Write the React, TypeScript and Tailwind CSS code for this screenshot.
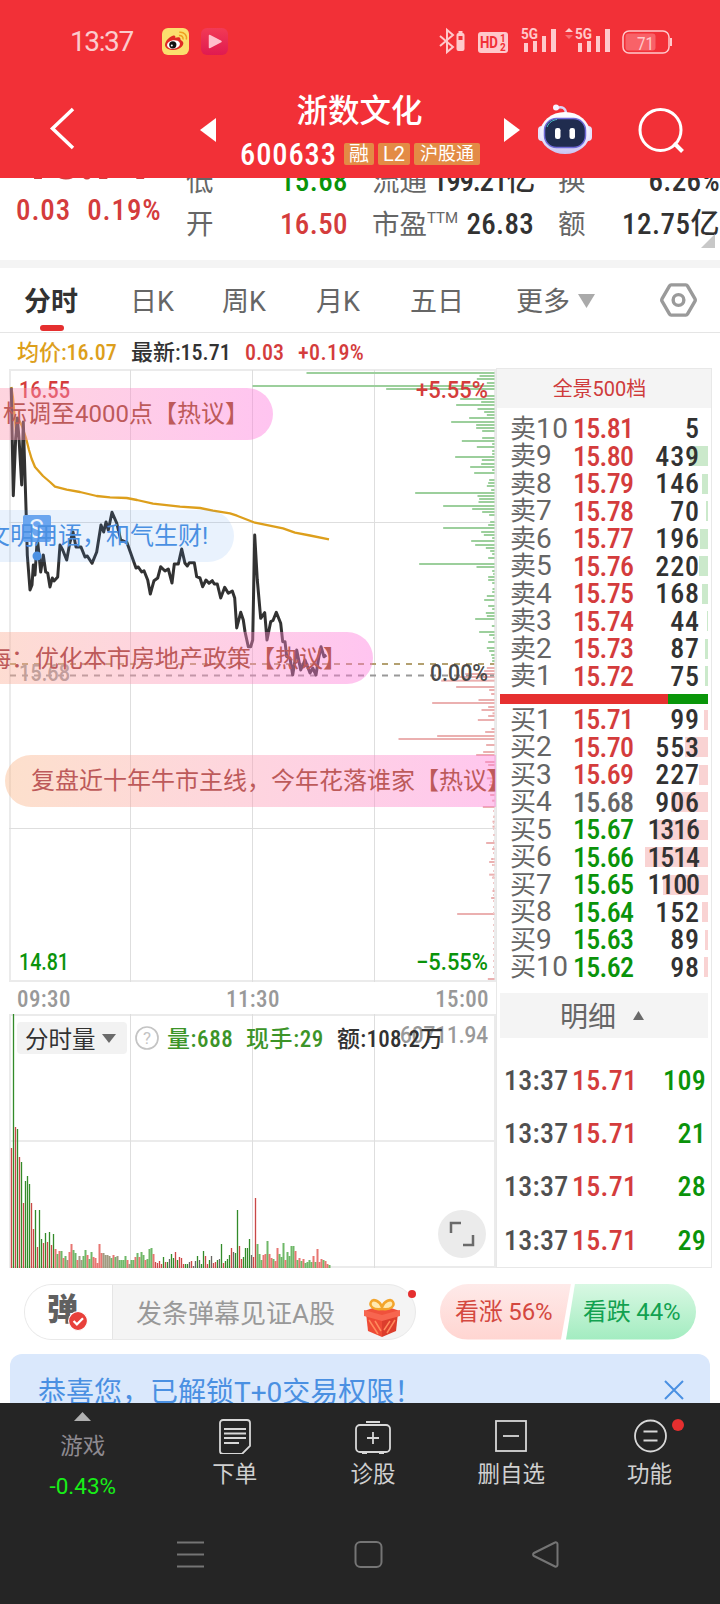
import {FC, memo, ReactNode} from 'react';

type Tone = 'up' | 'down' | 'flat';

const toneText: Record<Tone, string> = {
  up: 'text-[#d43c3c]',
  down: 'text-[#0a930a]',
  flat: 'text-[#666666]',
};

interface Level {
  label: string;
  price: string;
  size: number;
  bar: number;
  tone: Tone;
}

const asks: Level[] = [
  {label: '10', price: '15.81', size: 5, bar: 0, tone: 'up'},
  {label: '9', price: '15.80', size: 439, bar: 18, tone: 'up'},
  {label: '8', price: '15.79', size: 146, bar: 6, tone: 'up'},
  {label: '7', price: '15.78', size: 70, bar: 2, tone: 'up'},
  {label: '6', price: '15.77', size: 196, bar: 8, tone: 'up'},
  {label: '5', price: '15.76', size: 220, bar: 9, tone: 'up'},
  {label: '4', price: '15.75', size: 168, bar: 6, tone: 'up'},
  {label: '3', price: '15.74', size: 44, bar: 1, tone: 'up'},
  {label: '2', price: '15.73', size: 87, bar: 3, tone: 'up'},
  {label: '1', price: '15.72', size: 75, bar: 3, tone: 'up'},
];

const bids: Level[] = [
  {label: '1', price: '15.71', size: 99, bar: 4, tone: 'up'},
  {label: '2', price: '15.70', size: 553, bar: 23, tone: 'up'},
  {label: '3', price: '15.69', size: 227, bar: 9, tone: 'up'},
  {label: '4', price: '15.68', size: 906, bar: 37, tone: 'flat'},
  {label: '5', price: '15.67', size: 1316, bar: 54, tone: 'down'},
  {label: '6', price: '15.66', size: 1514, bar: 63, tone: 'down'},
  {label: '7', price: '15.65', size: 1100, bar: 45, tone: 'down'},
  {label: '8', price: '15.64', size: 152, bar: 6, tone: 'down'},
  {label: '9', price: '15.63', size: 89, bar: 3, tone: 'down'},
  {label: '10', price: '15.62', size: 98, bar: 4, tone: 'down'},
];

const trades = [109, 21, 28, 29];

const averageLine =
  '11.3,387 13,398 16,432 19,420 22,426 26,438 29,450 31.7,459 35,467 43,476 50,482 55,486.7 66.7,489.7 80,492 96.7,496 110,497.3 126.7,498 137,500 153,503.7 180,506.7 200,508 213,510.7 230,513.3 237,515.7 255,522.7 283,528.3 295,532.7 310,535.5 329,539.3';

const priceLine =
  '11.3,387.7 13.3,495.7 15.7,438 17.3,418 19,438 21.7,485 23.3,422 26,508 27.3,555 30,590 32,585 33.3,565 35,575 37.3,538 40.7,572 43.3,555 45.7,572 47.7,573 50,587 52.3,578 54,581 57.7,577 60,545 62.7,550 66.7,560 70,542 73,532 76,547 81,547 85,557 87.3,556 92,563.3 96.7,552 101,525 103.7,532 106,522 108.3,530 112,512.3 116.7,523 120.7,540 127,542.7 136,568 138.3,567 141.7,572 144,570.7 147.7,580 150.3,594 154,580.7 157.7,578 160.7,566.7 165,571 168.3,569 172,583 174.3,564 178.3,564 181.7,549 185,563.3 187.3,566 189.3,562.7 194.3,562.7 196.7,576.7 200,578 202.7,586.7 206,580 209,583.3 212.3,580.7 214.3,584 217.3,584 220.7,598 224.7,587.3 228.3,593.3 232.3,591 234.7,598 236.7,628 240.7,612.3 243.3,620 245,631.7 248.3,646.7 250.7,646.7 252.7,640 254.7,535 257.3,580 260.7,618.3 264.7,612.7 267,640 270.7,621.7 273,620.5 276.3,612.3 280.7,623.3 282.7,641.7 285,641.7 286.7,656.7 290,658 292.7,675 296.7,650 300.7,670 305,660 310,673 312.7,668 316,675 318.3,660 321,646.7 324,656.7 326.3,655';

// [offset, length] of every resting order bar, in thirds of a pixel
const askDepth: [number, number][] = [
  [339, 564], [348, 45], [357, 53], [369, 23], [378, 726], [387, 325], [408, 30], [417, 103], [426, 40], [435, 115],
  [447, 51], [456, 31], [465, 23], [474, 76], [486, 130], [495, 55], [504, 55], [513, 37], [534, 37], [543, 98],
  [552, 7], [561, 53], [573, 7], [582, 7], [591, 118], [600, 38], [612, 40], [621, 73], [630, 7], [639, 61],
  [660, 16], [669, 19], [678, 23], [690, 10], [699, 238], [708, 51], [717, 46], [726, 48], [738, 154], [747, 67],
  [756, 37], [765, 16], [786, 13], [795, 19], [804, 154], [816, 40], [825, 32], [834, 7], [843, 70], [855, 58],
  [864, 26], [873, 13], [882, 7], [894, 19], [912, 226], [921, 54], [933, 7], [942, 4], [951, 19], [960, 19],
  [969, 7], [987, 6], [996, 7], [1008, 23], [1020, 31], [1038, 19], [1047, 7], [1059, 26], [1068, 23], [1077, 58],
  [1098, 8], [1116, 46], [1125, 16], [1134, 4], [1146, 19], [1164, 23], [1173, 16], [1185, 10], [1194, 7], [1203, 7],
];

const bidDepth: [number, number][] = [
  [1212, 7], [1224, 23], [1233, 31], [1242, 88], [1251, 113], [1262, 160], [1281, 115], [1290, 16], [1302, 10],
  [1320, 48], [1329, 187], [1341, 19], [1350, 39], [1360, 6], [1368, 19], [1380, 50], [1407, 9], [1416, 28],
  [1428, 172], [1437, 288], [1455, 25], [1476, 34], [1485, 55], [1506, 28], [1515, 19], [1530, 23], [1555, 23],
  [1565, 13], [1575, 16], [1590, 7], [1605, 13], [1622, 7], [1641, 35], [1670, 4], [1685, 6], [1700, 6], [1725, 3],
  [1749, 25], [1767, 7], [1797, 10], [1806, 16], [1815, 7], [1844, 16], [1853, 7], [1893, 6], [1914, 10],
  [1962, 112], [2157, 20],
];

const volumeHeights = [
  120, 254, 141, 139, 111, 106, 65, 87, 92, 84, 65, 39, 58, 21, 58, 29, 25, 35, 26, 36, 23, 34, 19, 14, 17, 17, 10, 12,
  8, 16, 24, 18, 15, 8, 12, 8, 12, 18, 13, 9, 16, 11, 10, 5, 24, 15, 15, 13, 13, 12, 10, 13, 11, 12, 8, 8, 8, 12, 8, 4,
  8, 8, 11, 15, 11, 16, 13, 8, 9, 19, 20, 14, 6, 5, 7, 4, 11, 6, 6, 9, 14, 10, 16, 8, 11, 10, 4, 4, 4, 6, 7, 2, 7, 12,
  8, 4, 17, 12, 4, 8, 12, 5, 6, 8, 9, 24, 5, 7, 9, 13, 20, 16, 15, 58, 22, 9, 11, 20, 20, 29, 13, 11, 70, 24, 14, 8,
  13, 14, 27, 14, 10, 9, 7, 20, 14, 11, 25, 8, 16, 12, 22, 22, 17, 8, 10, 7, 9, 5, 6, 8, 6, 12, 6, 19, 6, 9, 8, 7, 4, 3,
];

// r: up minute, g: down minute, n: unchanged; ten minutes per entry
const volumeTones = [
  'rgrgrgrggg',
  'rrgrggrgrg',
  'rgrgrgrgnr',
  'rggrnnggrg',
  'grrrrrnnnn',
  'grgnggggrn',
  'ggrgrggrgg',
  'grrrrrgrgn',
  'ggrgrrrggn',
  'rnngnggrrg',
  'nrrgngrggg',
  'rnggrrgggg',
  'nrrgggrrgr',
  'rgrrgggrgg',
  'ggrgrgrggg',
  'grgrrrgrrg',
].join('');

const toneFill: Record<string, string> = {r: '#c84848', g: '#338a2a', n: '#666666'};
const softFill: Record<string, string> = {r: '#e87672', g: '#6fb868', n: '#a09a80'};

const ChartText: FC<{
  x: number;
  y: number;
  width: number;
  fill: string;
  end?: boolean;
  children: ReactNode;
}> = ({x, y, width, fill, end, children}) => (
  <text
    className="text-[23px] font-medium"
    fill={fill}
    lengthAdjust="spacingAndGlyphs"
    textAnchor={end ? 'end' : 'start'}
    textLength={width}
    x={x}
    y={y}>
    {children}
  </text>
);

const StatusBar: FC = memo(() => (
  <div className="flex h-[82px] items-center pl-[70px] pr-[46px] text-white/75">
    <span className="w-[92px] pt-[2px] text-[28px] tracking-[-1.400px]">13:37</span>
    <svg className="h-[27px] w-[27px]" viewBox="0 0 27 27">
      <rect fill="#fbdf6e" height="27" rx="6" width="27" />
      <path
        d="M3 17c0-4 5-9 8.500-9.500 2-.2 2 1 1.700 2.300 2.500-1 5.500-1 5.300 1.500-.1 1 .8 1 1.700 1.700C24 16 18 22 11.500 22 7 22 3 20 3 17z"
        fill="#e02a24"
      />
      <ellipse cx="11.500" cy="16.500" fill="#fff" rx="6.500" ry="4.300" transform="rotate(-8 11.500 16.500)" />
      <circle cx="10.800" cy="16.800" fill="#111" r="3.600" />
      <circle cx="9.800" cy="17.500" fill="#fff" r="1" />
      <path d="M17 7.500c2.500-.5 4.500 1.500 4 4M17.300 4.300c4.500-.8 8 2.700 7 7.200" fill="none" stroke="#f0a020" strokeWidth="1.500" />
    </svg>
    <svg className="ml-3 h-[27px] w-[27px]" viewBox="0 0 27 27">
      <defs>
        <linearGradient id="play" x1="0" x2="0" y1="0" y2="1">
          <stop offset="0" stopColor="#f23a55" />
          <stop offset="1" stopColor="#e01a50" />
        </linearGradient>
      </defs>
      <rect fill="url(#play)" height="27" rx="6" width="27" />
      <path d="M8.500 7.500v12l11.500-6z" fill="#ffc0cc" stroke="#ffc0cc" strokeLinejoin="round" strokeWidth="1.500" />
    </svg>
    <svg className="ml-auto h-[34px] w-[236px]" fill="none" viewBox="438 24 236 34">
      <path d="M440 36l13 11-6 5V30l6 5-13 11" stroke="#ffc9cb" strokeWidth="2" />
      <rect fill="#ffc9cb" height="18" rx="2" width="8" x="456.500" y="33" />
      <rect fill="#f23037" height="4" width="4" x="458.500" y="36" />
      <rect fill="#ffc9cb" height="2" width="4" x="458.500" y="31" />
      <rect fill="#ffc9cb" height="21" rx="3" width="30" x="478" y="32" />
      <text className="text-[17px] font-bold" fill="#f23037" lengthAdjust="spacingAndGlyphs" textLength="18" x="480" y="48">
        HD
      </text>
      <text className="text-[10px] font-bold" fill="#f23037" x="500" y="42">
        1
      </text>
      <text className="text-[10px] font-bold" fill="#f23037" x="500" y="51">
        2
      </text>
      <g fill="#ffc9cb">
        <text className="text-[15px] font-bold" lengthAdjust="spacingAndGlyphs" textLength="17" x="521" y="39">
          5G
        </text>
        <path d="M524 43h4v9h-4zM533 41h4v11h-4zM542 36h4v16h-4zM551 29h5v23h-5z" />
        <path d="M565 32l4-4 4 4z" />
        <path d="M565 35l4 4 4-4z" opacity=".4" />
        <text className="text-[15px] font-bold" lengthAdjust="spacingAndGlyphs" textLength="17" x="575" y="39">
          5G
        </text>
        <path d="M578 43h4v9h-4zM587 41h4v11h-4zM596 36h4v16h-4zM605 29h5v23h-5z" />
        <path d="M670 38h2v8h-2z" />
      </g>
      <rect height="22" rx="6" stroke="#ffc9cb" strokeWidth="1.500" width="46" x="623" y="31" />
      <rect fill="#f86268" height="17" rx="3" width="30" x="625.500" y="33.500" />
      <text className="text-[19px]" fill="#ffc9cb" lengthAdjust="spacingAndGlyphs" textLength="17" x="637" y="49.500">
        71
      </text>
    </svg>
  </div>
));

const Robot: FC = () => (
  <svg className="h-[52px] w-[56px]" viewBox="0 0 56 52">
    <defs>
      <linearGradient id="shell" x1="0" x2="0" y1="0" y2="1">
        <stop offset="0" stopColor="#ffffff" />
        <stop offset=".6" stopColor="#eceafd" />
        <stop offset="1" stopColor="#c9c3f2" />
      </linearGradient>
    </defs>
    <path d="M20 5c5-2 9 0 9 6" fill="none" stroke="#d9d4f6" strokeWidth="2.500" />
    <circle cx="19" cy="4.500" fill="#f6f3ff" r="3" />
    <rect fill="#e6e2fb" height="15" rx="4" width="54" x="1" y="23" />
    <ellipse cx="28" cy="30" fill="url(#shell)" rx="25" ry="21" />
    <rect fill="#202c4f" height="29" rx="12" stroke="#6f6ad8" strokeWidth="1.500" width="41" x="7.500" y="15.500" />
    <path d="M10 24c2-5 6-7 10-7.500" fill="none" stroke="#4dc0d0" strokeWidth="1" />
    <rect fill="#fff" height="11" rx="2.300" width="5.500" x="18" y="25" />
    <rect fill="#fff" height="11" rx="2.300" width="5.500" x="32.500" y="25" />
  </svg>
);

const TitleBar: FC = memo(() => (
  <div className="flex h-24 text-white">
    <svg className="ml-[48px] mt-[24px] h-[44px] w-[28px]" fill="none" viewBox="0 0 28 44">
      <path d="M25 3L4.500 22.500 25 42" stroke="#fff" strokeWidth="3.500" />
    </svg>
    <svg className="ml-[124px] mt-[36px] h-6 w-4" viewBox="0 0 16 24">
      <path d="M16 0v24L0 12z" fill="#fff" />
    </svg>
    <div className="ml-6 w-[240px]">
      <h1 className="h-[52px] pr-px pt-[4px] text-center text-[31.5px] font-medium leading-[52px]">浙数文化</h1>
      <div className="flex h-[40px] items-center gap-1 text-[20px]">
        <span className="w-[100px] pt-[2px] text-[30.5px] font-medium tracking-[.900px] [font-stretch:75%]">600633</span>
        <span className="h-[22px] rounded-xs bg-[#e38b45] px-[5px] text-center leading-[22px]">融</span>
        <span className="h-[22px] w-8 rounded-xs bg-[#e38b45] text-center leading-[22px]">L2</span>
        <span className="h-[22px] w-[66px] shrink-0 rounded-xs bg-[#e38b45] text-center text-[18px] leading-[22px]">
          沪股通
        </span>
      </div>
    </div>
    <svg className="ml-6 mt-[36px] h-6 w-4" viewBox="0 0 16 24">
      <path d="M0 0v24l16-12z" fill="#fff" />
    </svg>
    <div className="ml-[17px] mt-[21px]">
      <Robot />
    </div>
    <svg className="ml-[44px] mt-[24px] h-[48px] w-[48px]" fill="none" stroke="#fff" strokeWidth="3" viewBox="0 0 48 48">
      <circle cx="23.500" cy="24" r="20.500" />
      <path d="M37 37l8.500 8.500" strokeWidth="4" />
    </svg>
  </div>
));

const Quote: FC<{label: string; sup?: string; value: string; className?: string}> = ({
  label,
  sup,
  value,
  className = 'tracking-[.300px] text-[#323232]',
}) => (
  <div className="flex h-[43px] items-center justify-between whitespace-nowrap leading-[43px]">
    <span className="text-[27.500px] text-[#666666]">
      {label}
      {sup && <sup className="top-[-11px] text-[15px]">{sup}</sup>}
    </span>
    <span className={`text-[29px] font-medium [font-stretch:75%] ${className}`}>{value}</span>
  </div>
);

const QuotePanel: FC = memo(() => (
  <div className="relative flex h-[82px] items-end overflow-hidden bg-white pb-[14px]">
    <div className="h-[86px] w-[186px] pl-[16px] text-[#d43c3c]">
      <div className="-mt-[2px] mb-[2px] h-[20px] pl-[4px] text-[56px] font-bold leading-[4px] tracking-[-2.600px]">
        15.71
      </div>
      <div className="flex gap-[16px] text-[29px] font-medium leading-[60px] tracking-[.900px] [font-stretch:75%]">
        <span>0.03</span>
        <span>0.19%</span>
      </div>
    </div>
    <div className="w-[162px]">
      <Quote className="tracking-[.400px] text-[#0a930a]" label="低" value="15.68" />
      <Quote className="tracking-[.400px] text-[#d43c3c]" label="开" value="16.50" />
    </div>
    <div className="ml-[24px] w-[162px]">
      <Quote className="tracking-[-1.200px] text-[#323232]" label="流通" value="199.21亿" />
      <Quote label="市盈" sup="TTM" value="26.83" />
    </div>
    <div className="ml-[24px] w-[162px] shrink-0">
      <Quote label="换" value="6.26%" />
      <Quote className="tracking-[.500px] text-[#323232]" label="额" value="12.75亿" />
    </div>
    <svg className="absolute bottom-[12px] right-[5px] h-[14px] w-[14px]" viewBox="0 0 14 14">
      <path d="M14 0v14H0z" fill="#c8c8c8" />
    </svg>
  </div>
));

const Tabs: FC = memo(() => (
  <div className="flex h-[65px] items-center border-b border-[#e5e5e5] bg-white pl-[24px] pt-[5px] text-[27px] text-[#666666]">
    <div className="relative w-[106px] font-bold text-[#323232]">
      分时
      <i className="absolute -bottom-[8px] left-[16px] h-[6px] w-6 rounded-full bg-[#e52f2f]" />
    </div>
    <span className="w-[92px]">日K</span>
    <span className="w-[94px]">周K</span>
    <span className="w-[94px]">月K</span>
    <span className="w-[106px]">五日</span>
    <span className="w-[62px]">更多</span>
    <svg className="-mt-1 h-[14px] w-[17px]" viewBox="0 0 17 14">
      <path d="M0 0h17L8.500 14z" fill="#aaaaaa" />
    </svg>
    <svg className="-mt-[6px] ml-[65px] h-[36px] w-[37px]" fill="none" stroke="#9a9a9a" strokeWidth="3.500" viewBox="0 0 38 36">
      <path d="M11.500 2.500h15a2 2 0 0 1 1.700 1L35.800 16.500a3 3 0 0 1 0 3L28.200 32.500a2 2 0 0 1-1.700 1h-15a2 2 0 0 1-1.700-1L2.200 19.500a3 3 0 0 1 0-3L9.800 3.500a2 2 0 0 1 1.700-1z" />
      <circle cx="19" cy="18" r="5.500" />
    </svg>
  </div>
));

const Bullet: FC<{className: string; children: string}> = ({className, children}) => (
  <div className={`absolute flex h-[52px] items-center whitespace-nowrap text-[24px] ${className}`}>{children}</div>
);

const PriceChart: FC = memo(() => (
  <div className="relative h-[613px] overflow-hidden">
    <svg className="block h-[613px] w-[496px]" fill="none" viewBox="0 369 496 613">
      <path d="M10 369v613M495 369v613M9 370h487M9 981h487" stroke="#ebebeb" strokeWidth="2" />
      <path d="M130.500 370v612M252.500 370v612M374.500 370v612M9 522.500h487M9 828.500h487" stroke="#dedede" />
      <g transform="translate(494.500 260) scale(.33333)">
        {askDepth.map(([offset, length]) => (
          <rect fill="#9ccf9c" height="6" key={offset} width={length} x={-length} y={offset - 3} />
        ))}
        {bidDepth.map(([offset, length]) => (
          <rect fill="#ebb0b0" height="6" key={offset} width={length} x={-length} y={offset - 3} />
        ))}
      </g>
      <path d="M493.500 810v165" stroke="#f0c8c8" strokeDasharray="2 4" />
      <path d="M10 664h484" stroke="#b3a070" strokeDasharray="6 6" strokeWidth="1.800" />
      <path d="M10 675.500h484" stroke="#999999" strokeDasharray="6 6" strokeWidth="1.800" />
      <polyline points={averageLine} stroke="#dd9f1c" strokeLinejoin="round" strokeWidth="2.300" />
      <polyline points={priceLine} stroke="#323232" strokeLinejoin="round" strokeWidth="3" />
      <ChartText fill="#d43c3c" width={51} x={19} y={398}>16.55</ChartText>
      <ChartText fill="#999999" width={51} x={19} y={681}>15.68</ChartText>
      <ChartText fill="#0a930a" width={50} x={19} y={970}>14.81</ChartText>
      <ChartText end fill="#d43c3c" width={72} x={488} y={398}>+5.55%</ChartText>
      <ChartText end fill="#4a4a4a" width={58} x={488} y={681}>0.00%</ChartText>
      <ChartText end fill="#0a930a" width={72} x={488} y={970}>−5.55%</ChartText>
      <rect fill="#6fa8ef" height="27" rx="2" width="28" x="23" y="515" />
      <text className="text-[25px]" fill="#fff" x="29" y="538">
        S
      </text>
      <circle cx="37" cy="556" fill="#4a90e2" r="4.500" />
    </svg>
    <Bullet className="left-[-240px] top-[19px] w-[513px] rounded-full bg-linear-to-r from-[#fab585]/42 to-[#ff73dc]/42 pl-[243px] text-[#bd5a5a]">
      标调至4000点【热议】
    </Bullet>
    <Bullet className="left-[-42px] top-[141px] w-[276px] rounded-full bg-[#4a90f0]/12 pl-[28px] text-[#4a90e2]">
      文明用语，和气生财!
    </Bullet>
    <Bullet className="left-[-62px] top-[263px] w-[435px] rounded-full bg-linear-to-r from-[#fab585]/42 to-[#ff73dc]/42 pl-[49px] pt-px text-[#bd5a5a]">
      海：优化本市房地产政策【热议】
    </Bullet>
    <Bullet className="left-[5px] top-[386px] w-[528px] rounded-full bg-linear-to-r from-[#fab585]/42 to-[#ff73dc]/42 pl-[26px] text-[#bd5a5a]">
      复盘近十年牛市主线，今年花落谁家【热议】
    </Bullet>
  </div>
));

const VolumeChart: FC = memo(() => (
  <div className="relative h-[254px]">
    <svg className="block h-[254px] w-[496px]" fill="none" viewBox="0 1014 496 254">
      <path d="M10 1014v254M495 1014v254M9 1015h487M9 1141h487M9 1267h487" stroke="#ebebeb" strokeWidth="2" />
      <path d="M130.500 1014v254M252.500 1014v254M374.500 1014v254" stroke="#dedede" />
      {volumeHeights.map((height, i) => {
        const tone = volumeTones[i] ?? 'g';
        const sparse = i < 22 || (i > 71 && i < 123);
        return (
          <g key={i}>
            <rect fill={softFill[tone]} height={height} opacity={sparse ? 0.45 : 1} width="2" x={10.5 + i * 2} y={1268 - height} />
            {sparse && <rect fill={toneFill[tone]} height={height} width="1" x={11 + i * 2} y={1268 - height} />}
          </g>
        );
      })}
      <ChartText end fill="#999999" width={88} x={488} y={1043}>60711.94</ChartText>
    </svg>
    <div className="absolute left-[17px] top-2 flex h-8 items-center whitespace-nowrap text-[23px] text-[#323232]">
      <span className="flex h-8 w-[110px] items-center gap-1.5 rounded bg-[#f2f2f2] pl-[8px] text-[23.500px] leading-8">
        <span className="pt-[3px]">分时量</span>
        <svg className="h-[9px] w-[14px]" viewBox="0 0 14 9">
          <path d="M0 0h14L7 9z" fill="#6a6a6a" />
        </svg>
      </span>
      <svg className="ml-2 h-6 w-6" fill="none" viewBox="0 0 24 24">
        <circle cx="12" cy="12" r="11" stroke="#c4c4c4" strokeWidth="1.700" />
        <text className="text-[17px]" fill="#c4c4c4" textAnchor="middle" x="12" y="18">
          ?
        </text>
      </svg>
      <span className="ml-2 w-[79px] pt-[4px] font-medium tracking-[.600px] text-[#3c9428] [font-stretch:75%]">量:688</span>
      <span className="w-[91px] pt-[4px] font-medium tracking-[.600px] text-[#3c9428] [font-stretch:75%]">现手:29</span>
      <span className="pt-[4px] font-medium tracking-[.300px] [font-stretch:75%]">额:108.2万</span>
    </div>
    <button className="absolute bottom-[10px] right-[10px] h-12 w-12 rounded-full bg-[#ebebeb]">
      <svg className="h-12 w-12" fill="none" stroke="#6a6a6a" strokeWidth="2.500" viewBox="0 0 48 48">
        <path d="M13 23V13h10M25 35h10V25" />
      </svg>
    </button>
  </div>
));

const Row: FC<{level: Level; side: 'ask' | 'bid'}> = ({level, side}) => (
  <div className="relative flex h-[27.500px] items-center leading-[27.500px]">
    <i
      className={`absolute right-[3px] h-5 ${side === 'ask' ? 'bg-[#cbe9cb]' : 'bg-[#f9d3d3]'}`}
      style={{width: level.bar}}
    />
    <span className="relative w-[63px] whitespace-nowrap pl-[13px] text-[26px] text-[#666666]">
      {side === 'ask' ? '卖' : '买'}
      <span className="text-[28px] tracking-[.500px]">{level.label}</span>
    </span>
    <span className={`relative w-[64px] pl-[13px] text-[28px] font-medium tracking-[-.700px] [font-stretch:75%] ${toneText[level.tone]}`}>
      {level.price}
    </span>
    <span
      className={`relative ml-auto text-[28px] font-medium text-[#323232] [font-stretch:75%] ${
        level.size > 999 ? 'pr-[12px] tracking-[-1.100px]' : 'pr-[11px] tracking-[.900px]'
      }`}>
      {level.size}
    </span>
  </div>
);

const OrderBook: FC = memo(() => (
  <div className="h-[900px] w-[216px] border border-[#e8e8e8] bg-white">
    <div className="h-[39px] bg-[#f4f4f4] pr-[9px] text-center text-[20px] leading-[41px] text-[#cf3b3b]">全景500档</div>
    <div className="pt-[7px]">
      {asks.map(level => (
        <Row key={level.label} level={level} side="ask" />
      ))}
    </div>
    <div className="mx-[3px] mt-[4px] flex h-[10px]">
      <i className="w-[168px] bg-[#e63030]" />
      <i className="flex-1 bg-[#0a960a]" />
    </div>
    <div className="pt-[2px]">
      {bids.map(level => (
        <Row key={level.label} level={level} side="bid" />
      ))}
    </div>
    <div className="mx-[3px] mt-[12px] flex h-[45px] items-center justify-center gap-[17px] bg-[#f4f4f4] pr-1 text-[28px] leading-[45px] text-[#666666]">
      <span className="pt-[4px]">明细</span>
      <svg className="h-[9px] w-[11px]" viewBox="0 0 11 9">
        <path d="M0 9h11L5.500 0z" fill="#6a6a6a" />
      </svg>
    </div>
    <div className="pt-[16px]">
      {trades.map(size => (
        <div className="flex h-[53.300px] items-center text-[28px] font-medium tracking-[.300px] [font-stretch:75%]" key={size}>
          <span className="w-[75px] pl-[7px] text-[#505050]">13:37</span>
          <span className="text-[#d43c3c]">15.71</span>
          <span className="ml-auto pr-[5px] text-[#0a930a]">{size}</span>
        </div>
      ))}
    </div>
  </div>
));

const Gift: FC = () => (
  <svg className="h-[40px] w-[38px]" viewBox="0 0 38 40">
    <path d="M1 13l18-6 18 6-18 5z" fill="#f0513c" />
    <path d="M3 15l16 5v19L5 33z" fill="#ee4a35" />
    <path d="M35 15l-16 5v19l14-6z" fill="#dc3d2c" />
    <path d="M1 12l18 5v6L1 18zM37 12l-18 5v6l18-5z" fill="#f76650" />
    <path d="M6 22l9 14M12 23l6 10M32 22l-8 13M27 23l-6 9" stroke="#ff8a5c" strokeWidth="1.500" />
    <path d="M18 11C10 12 6 8 8 4s9-1 11 5c2-6 9-9 11-5s-2 8-10 7z" fill="#ffe9b0" stroke="#f3a52c" strokeWidth="2.500" />
  </svg>
);

const Danmaku: FC = memo(() => (
  <div className="flex h-[55px] items-center">
    <div className="relative ml-6 flex h-[56px] w-[392px] rounded-full border border-[#e9e9e9] bg-[#f4f4f4]">
      <div className="relative w-[88px] rounded-l-full border-r border-[#e5e5e5] bg-white pl-[22px] text-[31px] font-black leading-[50px] text-[#606060]">
        弹
        <svg className="absolute left-[43px] top-[26px] h-[20px] w-[20px]" viewBox="0 0 18 18">
          <circle cx="9" cy="9" fill="#e8403a" r="8.500" stroke="#fff" />
          <path d="M5 9l3 3 5.500-5.500" fill="none" stroke="#fff" strokeWidth="2" />
        </svg>
      </div>
      <span className="pl-[23px] text-[26px] leading-[58px] text-[#999999]">发条弹幕见证A股</span>
      <div className="absolute left-[338px] top-[13px]">
        <Gift />
      </div>
      <i className="absolute right-[-1px] top-[5px] h-2 w-2 rounded-full bg-[#e52f2f]" />
    </div>
    <div className="ml-6 flex h-[56px] w-[256px] overflow-hidden rounded-full text-[24px] leading-[56px]">
      <div className="w-[131px] bg-linear-to-b from-[#feeae9] to-[#ffd5d1] pl-[15px] tracking-[-.200px] text-[#d4483f] [clip-path:polygon(0_0,100%_0,121px_100%,0_100%)]">
        看涨 56%
      </div>
      <div className="-ml-[5px] w-[130px] bg-linear-to-b from-[#d8f8e3] to-[#a2ecc0] pl-[17px] tracking-[-.200px] text-[#12a150] [clip-path:polygon(9px_0,100%_0,100%_100%,0_100%)]">
        看跌 44%
      </div>
    </div>
  </div>
));

const navItems: {label: string; icon: ReactNode}[] = [
  {
    label: '下单',
    icon: (
      <>
        <path d="M6 2h24a3 3 0 0 1 3 3v23l-8 8H6a3 3 0 0 1-3-3V5a3 3 0 0 1 3-3z" />
        <path d="M7 11h22M7 15.500h22M7 20h22M7 25h15" />
      </>
    ),
  },
  {
    label: '诊股',
    icon: (
      <>
        <rect height="27" rx="4" width="34" x="1" y="7" />
        <path d="M11 4h14M18 14v12M12 20h12M7 35h5M24 35h5" />
      </>
    ),
  },
  {
    label: '删自选',
    icon: (
      <>
        <rect height="30" width="30" x="3" y="3" />
        <path d="M10 18h16" />
      </>
    ),
  },
  {
    label: '功能',
    icon: (
      <>
        <circle cx="18.500" cy="18" r="15.500" />
        <path d="M11.500 13.500h14M11.500 22.500h14" />
      </>
    ),
  },
];

const BottomBar: FC = memo(() => (
  <div className="h-[201px] bg-[#252525]">
    <div className="flex h-[107px]">
      <div className="w-[165.500px] text-center text-[22.500px] text-[#8e8a90]">
        <svg className="mx-auto mt-[9px] h-[9px] w-[17px]" viewBox="0 0 17 9">
          <path d="M0 9h17L8.500 0z" fill="#b0b0b0" />
        </svg>
        <div className="pt-[8px] leading-[34px]">游戏</div>
        <div className="pt-[6px] leading-[34px] text-[#18ef18]">-0.43%</div>
      </div>
      {navItems.map(({label, icon}) => (
        <div className="relative flex w-[138.300px] flex-col items-center pt-[15px] text-[22.500px] text-[#d0d0d0]" key={label}>
          <svg className="h-9 w-9" fill="none" stroke="#d8d8d8" strokeWidth="1.800" viewBox="0 0 36 36">
            {icon}
          </svg>
          <span className="leading-[41px]">{label}</span>
          {label === '功能' && <i className="absolute left-[92px] top-4 h-3 w-3 rounded-full bg-[#e52f2f]" />}
        </div>
      ))}
    </div>
    <svg className="block h-[94px] w-[720px]" fill="none" stroke="#757575" strokeWidth="2" viewBox="0 1510 720 94">
      <path d="M177 1542.500h27M177 1554.500h27M177 1566.500h27" />
      <rect height="25" rx="5" width="26" x="355.500" y="1542" />
      <path d="M555 1542.500l-21 10.500a1.700 1.700 0 0 0 0 3l21 10.500a1.700 1.700 0 0 0 2.500-1.500v-21a1.700 1.700 0 0 0-2.500-1.500z" />
    </svg>
  </div>
));

const App: FC = () => (
  <div className="h-[1604px] w-[720px] overflow-hidden bg-white font-['Roboto','Noto_Sans_CJK_SC',sans-serif]">
    <header className="bg-[#f23037]">
      <StatusBar />
      <TitleBar />
    </header>
    <QuotePanel />
    <div className="h-2 bg-[#f4f4f4]" />
    <Tabs />
    <div className="flex h-[35px] items-center pl-[17px] pt-[3px] text-[22px] text-[#d43c3c] [font-stretch:75%]">
      <span className="w-[114px] font-medium text-[#dd9f1c]">均价:16.07</span>
      <span className="w-[114px] font-medium text-[#323232]">最新:15.71</span>
      <span className="w-[53px] font-medium">0.03</span>
      <span className="font-medium tracking-[.400px]">+0.19%</span>
    </div>
    <main className="flex h-[900px]">
      <div className="w-[496px] pt-px">
        <PriceChart />
        <div className="flex h-8 items-center justify-between pl-[17px] pr-[7px] pt-[4px] text-[23px] font-medium tracking-[.400px] text-[#999999] [font-stretch:75%]">
          <span>09:30</span>
          <span>11:30</span>
          <span>15:00</span>
        </div>
        <VolumeChart />
      </div>
      <OrderBook />
    </main>
    <div className="h-[16px]" />
    <Danmaku />
    <div className="mx-[10px] mt-[15px] flex h-[49px] justify-between overflow-hidden rounded-t-xl bg-[#dae8fc] pl-[28px] pr-[26px] pt-[12px] text-[28px] leading-[54px] text-[#4a90e2]">
      恭喜您，已解锁T+0交易权限！
      <svg className="mt-[14px] h-5 w-5" stroke="#4a90e2" strokeWidth="2" viewBox="0 0 20 20">
        <path d="M1 1l18 18M19 1L1 19" />
      </svg>
    </div>
    <BottomBar />
  </div>
);

export default App;
